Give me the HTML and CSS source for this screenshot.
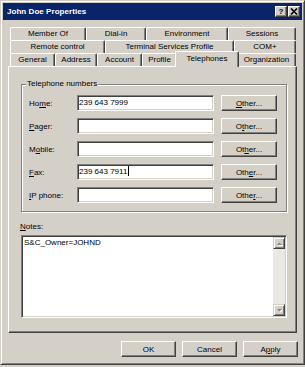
FILE: index.html
```html
<!DOCTYPE html>
<html>
<head>
<meta charset="utf-8">
<link rel="stylesheet" href="styles.css">
</head>
<body>
<div class="window">
  <div class="titlebar">
    <span class="title">John Doe Properties</span>
    <div class="tb-buttons">
      <span class="tb-btn help">?</span>
      <span class="tb-btn close"><svg width="8" height="7" viewBox="0 0 8 7"><path d="M1 0.5 L7 6.5 M7 0.5 L1 6.5" stroke="#000" stroke-width="1.6"/></svg></span>
    </div>
  </div>
  <div class="content">
    <div class="tabs">
      <div class="tab-row">
        <div class="tab w76">Member Of</div>
        <div class="tab w60">Dial-in</div>
        <div class="tab w82">Environment</div>
        <div class="tab w68">Sessions</div>
      </div>
      <div class="tab-row">
        <div class="tab w95">Remote control</div>
        <div class="tab w129">Terminal Services Profile</div>
        <div class="tab w62">COM+</div>
      </div>
      <div class="tab-row">
        <div class="tab w45">General</div>
        <div class="tab w42">Address</div>
        <div class="tab w45">Account</div>
        <div class="tab w35">Profile</div>
        <div class="tab active">Telephones</div>
        <div class="tab w59">Organization</div>
      </div>
    </div>
    <div class="panel">
      <div class="group">
        <span class="group-title">Telephone numbers</span>
        <div class="phone-row">
          <span class="label">Ho<u>m</u>e:</span>
          <div class="field">239 643 7999</div>
          <button class="btn other"><u>O</u>ther...</button>
        </div>
        <div class="phone-row">
          <span class="label"><u>P</u>ager:</span>
          <div class="field"></div>
          <button class="btn other">O<u>t</u>her...</button>
        </div>
        <div class="phone-row">
          <span class="label">M<u>o</u>bile:</span>
          <div class="field"></div>
          <button class="btn other">Ot<u>h</u>er...</button>
        </div>
        <div class="phone-row">
          <span class="label"><u>F</u>ax:</span>
          <div class="field">239 643 7911<span class="caret"></span></div>
          <button class="btn other">Oth<u>e</u>r...</button>
        </div>
        <div class="phone-row">
          <span class="label"><u>I</u>P phone:</span>
          <div class="field"></div>
          <button class="btn other">Othe<u>r</u>...</button>
        </div>
      </div>
      <div class="notes-label"><u>N</u>otes:</div>
      <div class="notes">
        <div class="notes-text">S&amp;C_Owner=JOHND</div>
        <div class="scrollbar">
          <div class="sb-btn"><svg width="7" height="5" viewBox="0 0 7 5"><path d="M1 4 L3.5 1.5 L6 4 Z" fill="#fff" transform="translate(1,1)"/><path d="M1 4 L3.5 1.5 L6 4 Z" fill="#808080"/></svg></div>
          <div class="sb-track"></div>
          <div class="sb-btn"><svg width="7" height="5" viewBox="0 0 7 5"><path d="M1 1 L3.5 3.5 L6 1 Z" fill="#fff" transform="translate(1,1)"/><path d="M1 1 L3.5 3.5 L6 1 Z" fill="#808080"/></svg></div>
        </div>
      </div>
    </div>
    <div class="footer">
      <button class="btn dlg">OK</button>
      <button class="btn dlg">Cancel</button>
      <button class="btn dlg">A<u>p</u>ply</button>
    </div>
  </div>
</div>
</body>
</html>
```
FILE: styles.css
```css
* { box-sizing: border-box; }
html, body { margin: 0; padding: 0; }
body {
  background: #d4d0c8;
  font-family: "Liberation Sans", Arial, sans-serif;
  font-size: 8px;
  color: #000;
  width: 305px;
  height: 367px;
  overflow: hidden;
}
.window {
  width: 305px;
  height: 365px;
  border: 1px solid;
  border-color: #d4d0c8 #404040 #404040 #d4d0c8;
  box-shadow: inset 1px 1px 0 #fff, inset -1px -1px 0 #808080;
  padding: 2px;
  display: flex;
  flex-direction: column;
  background: #d4d0c8;
}
.titlebar {
  height: 17px;
  background: #0a246a;
  display: flex;
  align-items: center;
  padding: 0 2px 0 4px;
  flex: none;
}
.title {
  color: #fff;
  font-weight: bold;
  font-size: 8px;
  letter-spacing: 0.05px;
}
.tb-buttons {
  margin-left: auto;
  display: flex;
  gap: 1px;
}
.tb-btn {
  width: 12px;
  height: 11px;
  background: #d4d0c8;
  border: 1px solid;
  border-color: #fff #404040 #404040 #fff;
  box-shadow: inset -1px -1px 0 #808080;
  font-weight: bold;
  font-size: 8px;
  line-height: 9px;
  text-align: center;
  display: flex;
  align-items: center;
  justify-content: center;
}
.content {
  flex: 1;
  display: flex;
  flex-direction: column;
  padding: 7px 5px 0 5px;
}
.tabs {
  margin: 0 1px 0 2px;
  display: flex;
  flex-direction: column;
}
.tab-row {
  display: flex;
  height: 13px;
}
.tab {
  flex: none;
  height: 13px;
  border-left: 1px solid #fff;
  border-top: 1px solid #fff;
  border-right: 1px solid #404040;
  box-shadow: inset -1px 0 0 #808080;
  border-radius: 2px 2px 0 0;
  text-align: center;
  line-height: 12px;
  white-space: nowrap;
  background: #d4d0c8;
}
.w35 { width: 35px; }
.w42 { width: 42px; }
.w45 { width: 45px; }
.w59 { width: 59px; }
.w60 { width: 60px; }
.w62 { width: 62px; }
.w68 { width: 68px; }
.w76 { width: 76px; }
.w82 { width: 82px; }
.w95 { width: 95px; }
.w129 { width: 129px; }
.tab.active {
  width: 64px;
  height: 16px;
  margin: -2px -2px 0 -2px;
  align-self: flex-start;
  position: relative;
  z-index: 1;
  line-height: 13px;
}
.panel {
  height: 267px;
  border: 1px solid;
  border-color: #fff #404040 #404040 #fff;
  box-shadow: inset -1px -1px 0 #808080;
  padding: 17px 0 0 12px;
  flex: none;
}
.group {
  position: relative;
  width: 266px;
  height: 128px;
  border: 1px solid #808080;
  box-shadow: 1px 1px 0 #fff, inset 1px 1px 0 #fff;
  padding: 10px 0 0 7px;
}
.group-title {
  position: absolute;
  top: -6px;
  left: 4px;
  padding: 0 1px;
  background: #d4d0c8;
  line-height: 10px;
}
.phone-row {
  display: flex;
  align-items: center;
  height: 16px;
  margin-bottom: 7px;
}
.label {
  width: 48px;
  flex: none;
}
.field {
  width: 137px;
  height: 16px;
  flex: none;
  background: #fff;
  border: 1px solid;
  border-color: #808080 #fff #fff #808080;
  box-shadow: inset 1px 1px 0 #404040, inset -1px -1px 0 #d4d0c8;
  padding-left: 1px;
  line-height: 14px;
  white-space: nowrap;
}
.caret {
  display: inline-block;
  width: 1px;
  height: 10px;
  background: #000;
  vertical-align: -2px;
  margin-left: 1px;
}
.btn {
  font-family: "Liberation Sans", Arial, sans-serif;
  font-size: 8px;
  color: #000;
  background: #d4d0c8;
  border: 1px solid;
  border-color: #fff #404040 #404040 #fff;
  box-shadow: inset -1px -1px 0 #808080;
  padding: 0;
  margin: 0;
  height: 16px;
  line-height: 13px;
  text-align: center;
  flex: none;
}
.btn.other {
  width: 56px;
  margin-left: 7px;
}
.notes-label {
  margin: 10px 0 0 -1px;
  line-height: 10px;
}
.notes {
  margin-top: 3px;
  width: 266px;
  height: 83px;
  display: flex;
  background: #fff;
  border: 1px solid;
  border-color: #808080 #fff #fff #808080;
  box-shadow: inset 1px 1px 0 #404040, inset -1px -1px 0 #d4d0c8;
  padding: 1px;
}
.notes-text {
  flex: 1;
  padding: 1px 0 0 1px;
  line-height: 10px;
}
.scrollbar {
  width: 12px;
  display: flex;
  flex-direction: column;
}
.sb-btn {
  height: 12px;
  background: #d4d0c8;
  border: 1px solid;
  border-color: #d4d0c8 #404040 #404040 #d4d0c8;
  box-shadow: inset 1px 1px 0 #fff, inset -1px -1px 0 #808080;
  display: flex;
  align-items: center;
  justify-content: center;
}
.sb-track {
  flex: 1;
  background: #eae8e3;
}
.footer {
  display: flex;
  justify-content: flex-end;
  gap: 6px;
  margin: 8px -1px 0 0;
}
.btn.dlg {
  width: 55px;
}
```
